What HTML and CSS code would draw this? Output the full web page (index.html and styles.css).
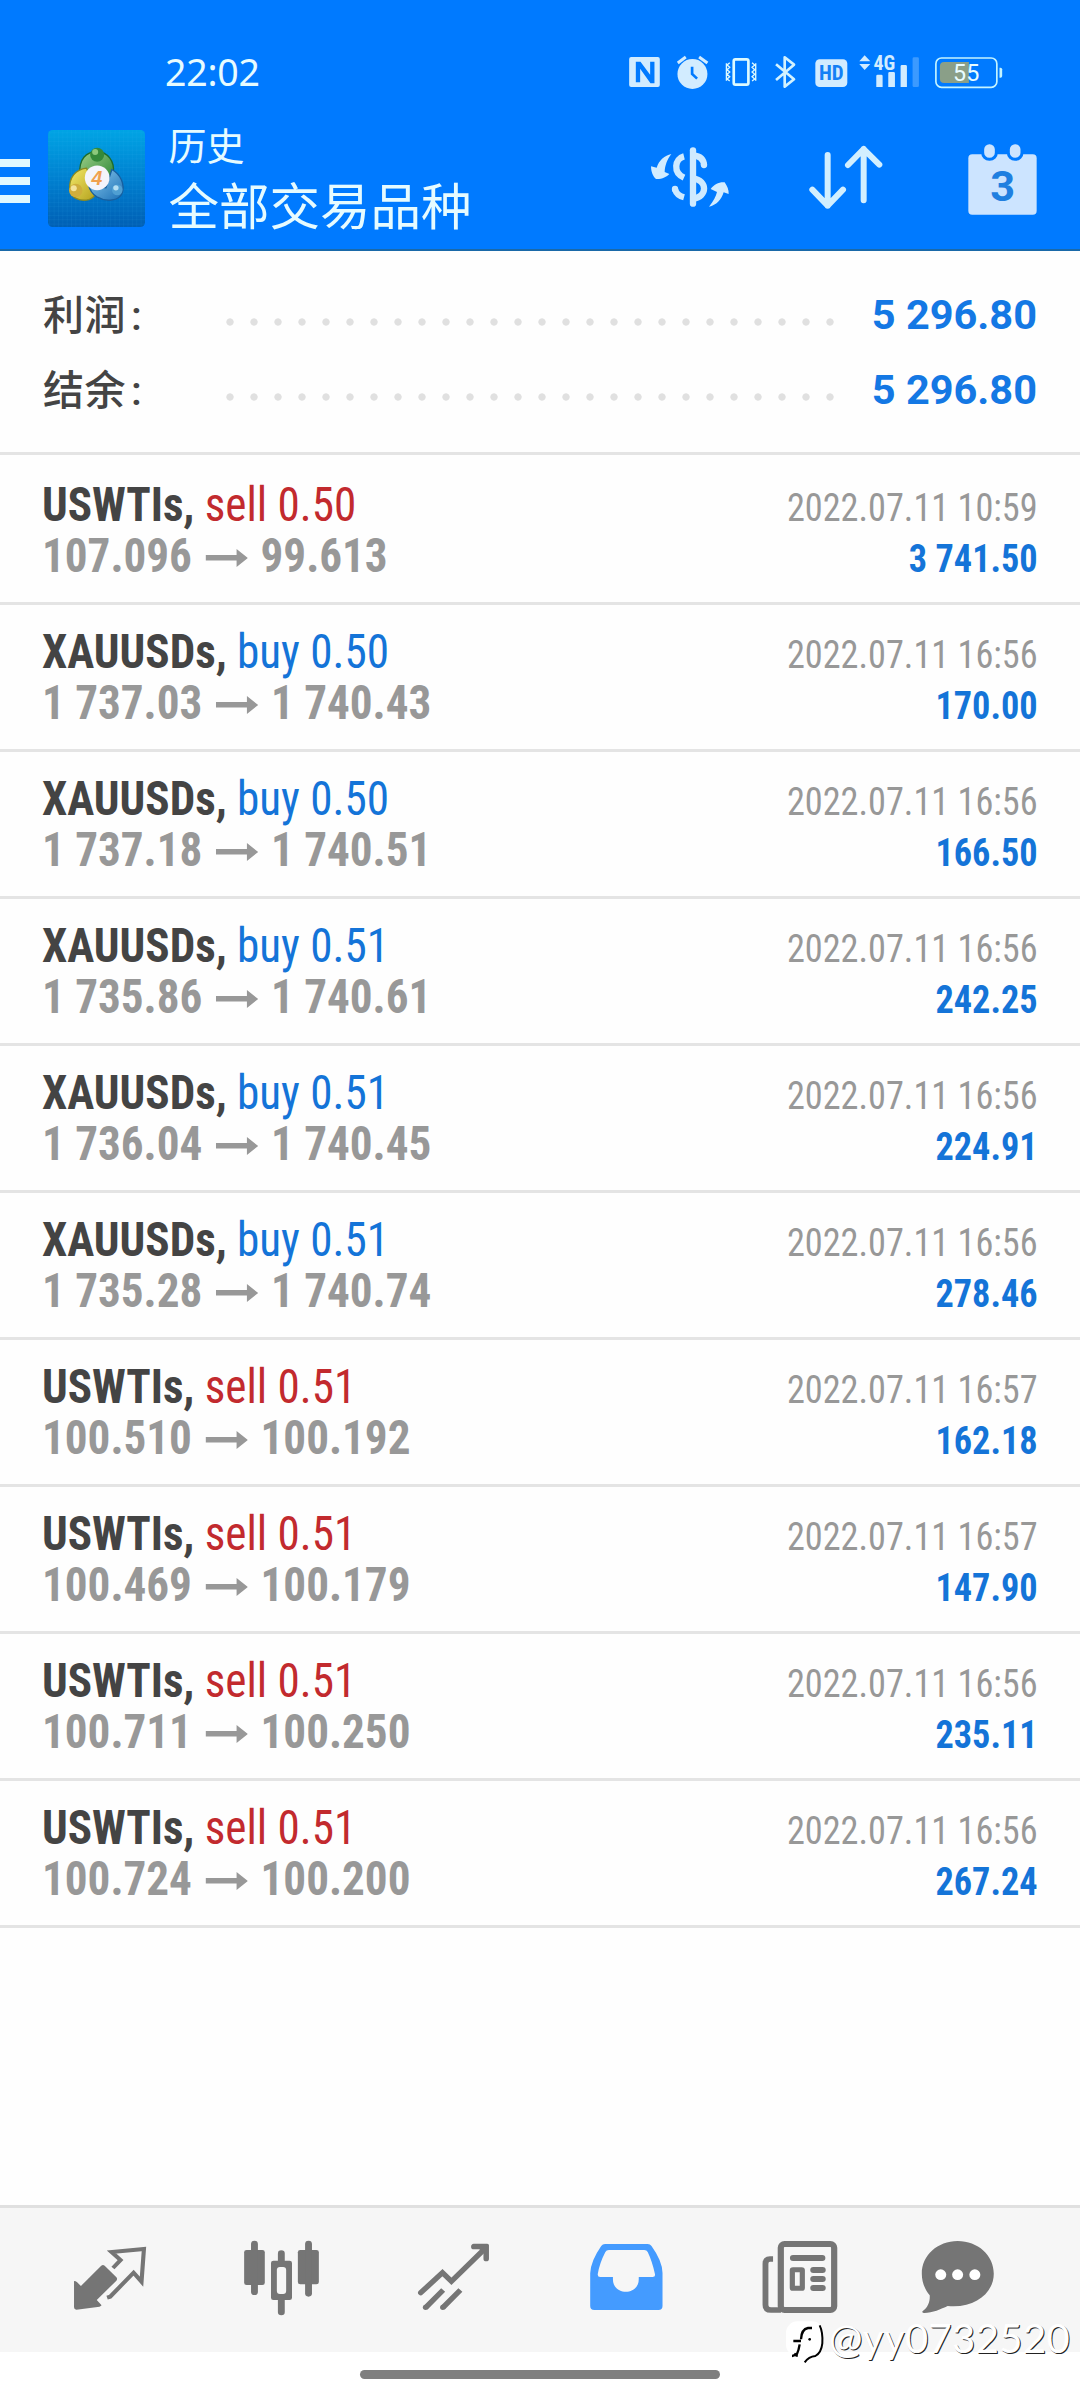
FILE: index.html
```
<!DOCTYPE html>
<html lang="zh-CN">
<head>
<meta charset="utf-8">
<title>历史</title>
<link rel="stylesheet" href="styles.css">
</head>
<body>
<header class="header">
  <div class="status">
    <span class="clock">22:02</span>
    <svg class="status-icons" viewBox="80 60 1140 130" width="380" height="43.3">
      <path class="ice" fill-rule="evenodd" d="M92 81H172Q178 81 178 87V165Q178 171 172 171H92Q86 171 86 165V87Q86 81 92 81ZM106 95V157H119V116L150 160H162V95H149V134L120 95Z"/>
      <circle class="ice" cx="276" cy="132" r="45"/>
      <path d="M232 99L256 81M296 81L321 99" stroke="#d2ecff" stroke-width="9" fill="none"/>
      <path d="M275 110V132L290 146" stroke="#007aff" stroke-width="8" fill="none"/>
      <rect x="400" y="88" width="44" height="76" rx="5" fill="none" stroke="#ddfaff" stroke-width="8"/>
      <path d="M388 98L380 105L388 112L380 119L388 126L380 133L388 140L380 147L388 153M378 100V152M455 98L463 105L455 112L463 119L455 126L463 133L455 140L463 147L455 153M466 100V152" stroke="#ddfaff" stroke-width="4" fill="none"/>
      <path d="M527 103L581 148L553 170V82L581 104L527 150" stroke="#d2f2ff" stroke-width="8" fill="none" stroke-linejoin="round"/>
      <rect class="ice" x="645" y="88" width="96" height="83" rx="13"/>
      <text x="693" y="151" class="hd">HD</text>
      <path class="ice" d="M777 94L793 76L810 94ZM777 102H810L793 120Z"/>
      <text x="852" y="121" class="g4">4G</text>
      <path class="ice" d="M828 138Q828 134 832 134H843Q847 134 847 138V171H828ZM864 130Q864 126 868 126H880Q884 126 884 130V171H864ZM901 109Q901 105 905 105H916Q920 105 920 109V171H901Z"/>
      <rect x="937" y="82" width="19" height="89" rx="4" fill="#3c9aff"/>
      <rect x="1007" y="84" width="183" height="88" rx="17" fill="none" stroke="#c4f4ff" stroke-width="5"/>
      <path d="M1032 96H1106V159H1032Q1019 159 1019 146V109Q1019 96 1032 96Z" fill="#8a9f88"/>
      <path d="M1198 113H1201Q1206 113 1206 118V138Q1206 143 1201 143H1198Z" fill="#c4f4ff"/>
      <text x="1098" y="153" class="batt">55</text>
    </svg>
  </div>
  <div class="appbar">
    <div class="burger"><i></i><i></i><i></i></div>
    <svg class="logo" viewBox="22 32 290 290" width="97" height="97">
      <defs>
        <linearGradient id="bg" x1="0" y1="0" x2="0" y2="1"><stop offset="0" stop-color="#00a4e4"/><stop offset=".5" stop-color="#0080d0"/><stop offset="1" stop-color="#005fb4"/></linearGradient>
        <linearGradient id="gr" x1="0" y1="0" x2="1" y2="1"><stop offset="0" stop-color="#9fd08a"/><stop offset="1" stop-color="#23812f"/></linearGradient>
        <linearGradient id="ye" x1="0" y1="0" x2="1" y2="1"><stop offset="0" stop-color="#f5ea6a"/><stop offset="1" stop-color="#b3a01c"/></linearGradient>
        <linearGradient id="bl" x1="0" y1="0" x2="1" y2="1"><stop offset="0" stop-color="#8fcdf0"/><stop offset="1" stop-color="#1a6fb5"/></linearGradient>
        <pattern id="grid" width="13" height="13" patternUnits="userSpaceOnUse"><path d="M0 0H13M0 0V13" stroke="#35b4ee" stroke-opacity=".22" stroke-width="2"/></pattern>
      </defs>
      <rect x="22" y="32" width="290" height="290" rx="14" fill="url(#bg)"/>
      <rect x="22" y="32" width="290" height="290" rx="14" fill="url(#grid)"/>
      <path d="M117 165C114 118 136 97 168 97C200 97 222 125 217 160C213 180 200 192 192 198L175 150Z" fill="url(#gr)" stroke="#1d6c2d" stroke-width="4"/>
      <path d="M137 146C104 150 84 175 87 210C91 235 118 247 145 240C160 235 168 222 166 210Z" fill="url(#ye)" stroke="#8c8a20" stroke-width="4"/>
      <path d="M213 150C240 165 252 195 244 220C235 245 195 248 168 232C152 222 146 208 143 196L195 205Z" fill="url(#bl)" stroke="#175f9f" stroke-width="4"/>
      <circle cx="169" cy="106" r="21" fill="#35893a"/><circle cx="163" cy="98" r="9" fill="#8cc87c"/>
      <circle cx="105" cy="213" r="20" fill="#cfae3c"/><circle cx="99" cy="206" r="9" fill="#f3e39a"/>
      <circle cx="229" cy="211" r="16" fill="#4f9fd2"/><circle cx="225" cy="205" r="8" fill="#b4def2"/>
      <circle cx="169" cy="175" r="37" fill="#f4f4fb"/>
      <text x="168" y="197" class="four">4</text>
    </svg>
    <div class="titles"><div class="sub">历史</div><div class="title">全部交易品种</div></div>
    <div class="actions">
      <svg viewBox="30 45 246 190" width="82" height="63.3">
        <g fill="none" stroke="#cfeaff" stroke-width="19">
          <path d="M132 79C104 86 98 128 132 143"/>
          <path d="M105 178C109 191 117 198 132 202"/>
          <path d="M105 178V177M192 105V104" stroke-linecap="round"/>
          <path d="M160 76C180 78 191 89 192 105"/>
          <path d="M160 145C203 152 203 200 160 206"/>
          <path d="M159 61V221" stroke-linecap="round"/>
        </g>
        <path class="ice" d="M94 72C74 76 57 91 50 113L33 109C33 125 39 140 48 147C65 148 80 141 88 132L74 126C74 108 82 87 94 72ZM207 230C221 213 228 199 231 186L212 177C222 163 239 155 254 157C262 169 267 180 266 192L251 187C244 209 229 226 207 230Z"/>
      </svg>
      <svg viewBox="625 345 228 200" width="76" height="66.7">
        <path d="M684 378V530M638 482L684 530L730 482M792 514V360M745 408L792 360L839 407" fill="none" stroke="#d2efff" stroke-width="18" stroke-linecap="round" stroke-linejoin="round"/>
      </svg>
      <svg viewBox="1100 335 213 218" width="71" height="72.7">
        <rect x="1104" y="369" width="205" height="181" rx="12" fill="#cce4ff"/>
        <g fill="#cce4ff" stroke="#007aff" stroke-width="9"><rect x="1147" y="334" width="41" height="50" rx="20"/><rect x="1224" y="334" width="41" height="50" rx="20"/></g>
        <text x="1207" y="510" class="day">3</text>
      </svg>
    </div>
  </div>
</header>

<section class="summary">
  <div class="sum"><span class="label">利润<i>:</i></span><span class="dots"></span><b>5 296.80</b></div>
  <div class="sum"><span class="label">结余<i>:</i></span><span class="dots"></span><b>5 296.80</b></div>
</section>

<svg class="defs" width="0" height="0"><symbol id="arrow" viewBox="0 0 45 18" preserveAspectRatio="none"><path d="M0 6H33V0L45 9L33 18V11.5H0Z"/></symbol></svg>

<main class="deals">
  <div class="deal"><div class="l"><p><b>USWTIs,</b> <span class="sell">sell 0.50</span></p><p class="px">107.096<svg><use href="#arrow"/></svg>99.613</p></div><div class="r"><p>2022.07.11 10:59</p><p class="pl">3 741.50</p></div></div>
  <div class="deal"><div class="l"><p><b>XAUUSDs,</b> <span class="buy">buy 0.50</span></p><p class="px">1 737.03<svg><use href="#arrow"/></svg>1 740.43</p></div><div class="r"><p>2022.07.11 16:56</p><p class="pl">170.00</p></div></div>
  <div class="deal"><div class="l"><p><b>XAUUSDs,</b> <span class="buy">buy 0.50</span></p><p class="px">1 737.18<svg><use href="#arrow"/></svg>1 740.51</p></div><div class="r"><p>2022.07.11 16:56</p><p class="pl">166.50</p></div></div>
  <div class="deal"><div class="l"><p><b>XAUUSDs,</b> <span class="buy">buy 0.51</span></p><p class="px">1 735.86<svg><use href="#arrow"/></svg>1 740.61</p></div><div class="r"><p>2022.07.11 16:56</p><p class="pl">242.25</p></div></div>
  <div class="deal"><div class="l"><p><b>XAUUSDs,</b> <span class="buy">buy 0.51</span></p><p class="px">1 736.04<svg><use href="#arrow"/></svg>1 740.45</p></div><div class="r"><p>2022.07.11 16:56</p><p class="pl">224.91</p></div></div>
  <div class="deal"><div class="l"><p><b>XAUUSDs,</b> <span class="buy">buy 0.51</span></p><p class="px">1 735.28<svg><use href="#arrow"/></svg>1 740.74</p></div><div class="r"><p>2022.07.11 16:56</p><p class="pl">278.46</p></div></div>
  <div class="deal"><div class="l"><p><b>USWTIs,</b> <span class="sell">sell 0.51</span></p><p class="px">100.510<svg><use href="#arrow"/></svg>100.192</p></div><div class="r"><p>2022.07.11 16:57</p><p class="pl">162.18</p></div></div>
  <div class="deal"><div class="l"><p><b>USWTIs,</b> <span class="sell">sell 0.51</span></p><p class="px">100.469<svg><use href="#arrow"/></svg>100.179</p></div><div class="r"><p>2022.07.11 16:57</p><p class="pl">147.90</p></div></div>
  <div class="deal"><div class="l"><p><b>USWTIs,</b> <span class="sell">sell 0.51</span></p><p class="px">100.711<svg><use href="#arrow"/></svg>100.250</p></div><div class="r"><p>2022.07.11 16:56</p><p class="pl">235.11</p></div></div>
  <div class="deal"><div class="l"><p><b>USWTIs,</b> <span class="sell">sell 0.51</span></p><p class="px">100.724<svg><use href="#arrow"/></svg>100.200</p></div><div class="r"><p>2022.07.11 16:56</p><p class="pl">267.24</p></div></div>
</main>

<nav class="tabs">
  <svg viewBox="69.7 54 499.5 432" preserveAspectRatio="none">
    <path fill="#757575" d="M294 227Q299 223 304 227L338 262Q342 267 338 272L281 330L295 346Q293 349 289 350L222 359Q215 359 215 352V273Q220 273 224 277L235 288Z"/>
    <path d="M328 234L350 210L324 186L418 177L411 275L388 248L320 320L311 323" fill="none" stroke="#757575" stroke-width="12"/>
  </svg>
  <svg viewBox="569.2 54 499.5 432" preserveAspectRatio="none">
    <g fill="#757575"><rect x="709" y="180" width="60" height="105" rx="7"/><rect x="729" y="152" width="20" height="163" rx="10"/><rect x="865" y="180" width="61" height="103" rx="7"/><rect x="886" y="152" width="20" height="168" rx="10"/><rect x="787" y="212" width="61" height="118" rx="7"/><rect x="807" y="181" width="20" height="195" rx="10"/></g>
    <rect x="804" y="231" width="27" height="81" rx="9" fill="#f6f6f6"/>
  </svg>
  <svg viewBox="1068.7 54 499.5 432" preserveAspectRatio="none">
    <path d="M1222 308L1285 248L1311 274L1409 175" fill="none" stroke="#757575" stroke-width="16" stroke-linecap="round"/>
    <path d="M1376 161H1415Q1420 161 1420 166V206Q1420 214 1412 214T1404 206V190L1392 178H1376Q1368 178 1368 170T1376 161Z" fill="#757575"/>
    <path d="M1236 353L1287 300M1286 353L1337 300" stroke="#757575" stroke-width="16"/>
    <g fill="#757575"><circle cx="1236" cy="352" r="8"/><circle cx="1286" cy="352" r="8"/></g>
  </svg>
  <svg viewBox="0.2 54 499.5 432" preserveAspectRatio="none">
    <path fill="#449bff" fill-rule="evenodd" d="M189 162H313Q320 162 324 168Q356 214 356 249V348Q356 360 344 360H158Q146 360 146 348V250Q147 214 178 168Q182 162 189 162ZM200 180Q193 180 190 186Q173 220 168 252Q167 261 175 261H212V268C212 318 287 318 287 268V261H327Q336 261 334 252Q326 214 313 186Q310 180 303 180Z"/>
  </svg>
  <svg viewBox="499.7 54 499.5 432" preserveAspectRatio="none">
    <g fill="none" stroke="#757575"><rect x="699.5" y="162" width="155" height="198" rx="11" stroke-width="18"/><path d="M677 207H668Q655 207 655 221V344Q655 360 671 360H700" stroke-width="17"/><rect x="733" y="239" width="29" height="56" rx="2" stroke-width="15"/></g>
    <g stroke="#757575" stroke-width="18" stroke-linecap="round"><path d="M735 204H820M794 240H821M794 267H821M794 294H821"/></g>
  </svg>
  <svg viewBox="999.2 54 499.5 432" preserveAspectRatio="none">
    <path fill="#757575" d="M1213 153C1272 153 1318 196 1318 251C1318 308 1264 356 1184 348C1165 357 1140 369 1116 369Q1109 369 1111 364C1128 351 1133 333 1132 316C1118 299 1109 276 1109 251C1109 196 1155 153 1213 153Z"/>
    <g fill="#fff"><circle cx="1164" cy="254" r="16"/><circle cx="1213" cy="254" r="16"/><circle cx="1263" cy="254" r="16"/></g>
  </svg>
</nav>
<footer class="gesture"><i></i></footer>

<div class="mark">
  <svg viewBox="20 30 120 135" width="40" height="45">
    <rect x="20" y="34" width="112" height="104" rx="34" fill="#fff"/>
    <g fill="none" stroke="#000" stroke-width="7"><path d="M98 54H86Q66 58 65 88M42 93H65M61 103Q58 122 52 134V140M38 138Q46 138 50 130"/><path d="M121 46Q131 66 129 100Q126 128 108 138Q88 140 76 157" stroke-width="6"/></g>
    <circle cx="91" cy="88" r="4"/>
  </svg><span>@yy0732520</span>
</div>
</body>
</html>
```
FILE: styles.css
```
* { box-sizing: border-box; }
body { margin: 0; width: 1080px; height: 2400px; background: #fefefe; display: flex; flex-direction: column; position: relative; overflow: hidden; font-family: Roboto, "Noto Sans CJK SC", sans-serif; }
p { margin: 0; }
.defs { display: block; position: absolute; }
.ice { fill: #d2ecff; }

.header { height: 251px; flex: none; background: #007aff; border-bottom: 2px solid #1a69a8; color: #e6fbff; }
.status { height: 122px; display: flex; justify-content: space-between; padding: 50px 73px 0 165px; }
.clock { font: 37.5px/43px "Noto Sans", sans-serif; letter-spacing: -.2px; }
.hd { font: 700 63px "Roboto Condensed", sans-serif; text-anchor: middle; fill: #1380f5; }
.g4 { font: 700 60px "Roboto Condensed", sans-serif; text-anchor: middle; fill: #d2ecff; }
.batt { font: 70px Roboto, sans-serif; text-anchor: middle; fill: #e8fcff; }
.four { font: italic 700 58px "Liberation Sans", sans-serif; text-anchor: middle; fill: #f0a04e; }
.day { font: 700 130px Roboto, sans-serif; text-anchor: middle; fill: #1f7fe0; }
.appbar { display: flex; align-items: flex-start; height: 127px; }
.burger { width: 30px; margin: 37px 17.5px 0 0; display: flex; flex-direction: column; gap: 10px; }
.burger i { height: 8px; background: #e0f8ff; }
.logo { margin-top: 8px; }
.titles { margin: -3px 0 0 24px; width: 330px; font-family: "Noto Sans CJK SC", sans-serif; white-space: nowrap; font-weight: 400; }
.sub { font-size: 38px; line-height: 50px; }
.title { font-size: 50.5px; line-height: 69px; }
.actions { flex: 1; display: flex; justify-content: space-between; align-items: flex-start; padding: 21px 42px 0 151.5px; }
.actions svg:first-child { margin-top: 2px; }
.actions svg:nth-child(2) { margin: 1px 8px 0 0; }

.summary { height: 204px; flex: none; border-bottom: 3px solid #e4e4e4; padding: 26px 43px 0 43px; }
.sum { height: 75px; display: flex; align-items: center; }
.label { width: 175px; font: 500 41px/75px Roboto, "Noto Sans CJK SC", sans-serif; color: #444; letter-spacing: .5px; padding-top: 3px; }
.label i { font-style: normal; margin-left: 5px; }
.dots { width: 624px; height: 8px; margin: 14px 0 0; background: radial-gradient(circle at 12px 4px, #e0e0e0 3.3px, transparent 4px) 0 0 / 24px 8px; }
.sum b { margin-left: auto; font-size: 41.5px; color: #1478e4; line-height: 75px; }

.deals { padding-top: 3px; flex: 1; }
.deal { height: 147px; border-bottom: 3px solid #e4e4e4; display: flex; justify-content: space-between; padding: 18px 42px 0; font-family: "Roboto Condensed", Roboto, sans-serif; white-space: nowrap; }
.l { transform: scaleX(.94); transform-origin: 0 0; font-size: 48px; line-height: 51px; padding-top: 3px; }
.l b { color: #444; }
.px { font-weight: 700; color: #989898; }
.px svg { width: 45px; height: 18px; margin: 0 14px; fill: #989898; vertical-align: 5px; }
.sell { color: #c22a2e; }
.buy { color: #1474d8; }
.r { transform: scaleX(.93); transform-origin: 100% 0; font-size: 39px; line-height: 51px; text-align: right; color: #989898; padding-top: 7px; }
.pl { font-weight: 700; color: #1474d8; }

.tabs { height: 147px; flex: none; border-top: 3px solid #e0e0e0; background: #f6f6f6; display: flex; padding-left: 24px; }
.tabs svg { width: 172px; height: 144px; }
.gesture { height: 48px; flex: none; background: #fff; padding: 18px 360px; }
.gesture i { display: block; height: 9px; border-radius: 5px; background: #7f7f7f; }

.mark { position: absolute; left: 786px; top: 2320px; display: flex; align-items: flex-start; gap: 3px; }
.mark span { font: 40px/36px Lato, sans-serif; color: #fff; text-shadow: 1px 1px 0 #222; letter-spacing: .4px; }
```
